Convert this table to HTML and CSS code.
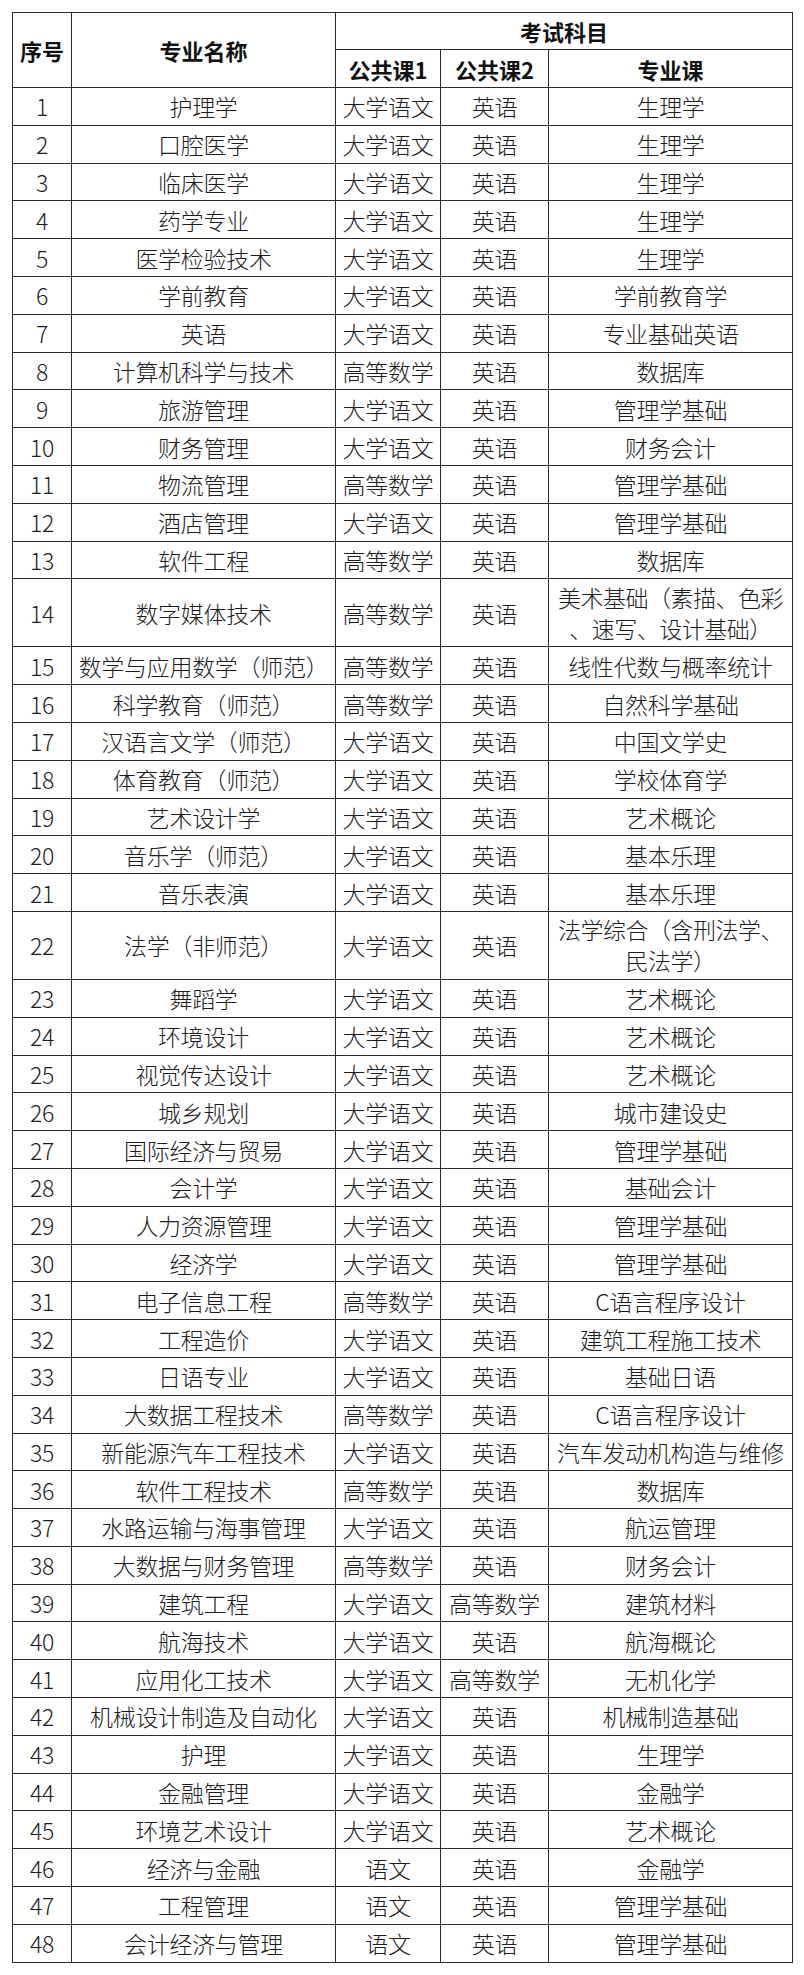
FILE: index.html
```html
<!DOCTYPE html>
<html lang="zh-CN">
<head>
<meta charset="utf-8">
<title>考试科目</title>
<link rel="stylesheet" href="styles.css">
</head>
<body>
<table class="exam">
<colgroup>
<col class="c-no"><col class="c-name"><col class="c-p1"><col class="c-p2"><col class="c-major">
</colgroup>
<thead>
<tr class="h1"><th rowspan="2">序号</th><th rowspan="2">专业名称</th><th colspan="3">考试科目</th></tr>
<tr class="h2"><th>公共课1</th><th>公共课2</th><th>专业课</th></tr>
</thead>
<tbody>
<tr><td>1</td><td>护理学</td><td>大学语文</td><td>英语</td><td>生理学</td></tr>
<tr><td>2</td><td>口腔医学</td><td>大学语文</td><td>英语</td><td>生理学</td></tr>
<tr><td>3</td><td>临床医学</td><td>大学语文</td><td>英语</td><td>生理学</td></tr>
<tr><td>4</td><td>药学专业</td><td>大学语文</td><td>英语</td><td>生理学</td></tr>
<tr><td>5</td><td>医学检验技术</td><td>大学语文</td><td>英语</td><td>生理学</td></tr>
<tr><td>6</td><td>学前教育</td><td>大学语文</td><td>英语</td><td>学前教育学</td></tr>
<tr><td>7</td><td>英语</td><td>大学语文</td><td>英语</td><td>专业基础英语</td></tr>
<tr><td>8</td><td>计算机科学与技术</td><td>高等数学</td><td>英语</td><td>数据库</td></tr>
<tr><td>9</td><td>旅游管理</td><td>大学语文</td><td>英语</td><td>管理学基础</td></tr>
<tr><td>10</td><td>财务管理</td><td>大学语文</td><td>英语</td><td>财务会计</td></tr>
<tr><td>11</td><td>物流管理</td><td>高等数学</td><td>英语</td><td>管理学基础</td></tr>
<tr><td>12</td><td>酒店管理</td><td>大学语文</td><td>英语</td><td>管理学基础</td></tr>
<tr><td>13</td><td>软件工程</td><td>高等数学</td><td>英语</td><td>数据库</td></tr>
<tr class="tall"><td>14</td><td>数字媒体技术</td><td>高等数学</td><td>英语</td><td class="wrap">美术基础（素描、色彩<br>、速写、设计基础）</td></tr>
<tr><td>15</td><td>数学与应用数学（师范）</td><td>高等数学</td><td>英语</td><td>线性代数与概率统计</td></tr>
<tr><td>16</td><td>科学教育（师范）</td><td>高等数学</td><td>英语</td><td>自然科学基础</td></tr>
<tr><td>17</td><td>汉语言文学（师范）</td><td>大学语文</td><td>英语</td><td>中国文学史</td></tr>
<tr><td>18</td><td>体育教育（师范）</td><td>大学语文</td><td>英语</td><td>学校体育学</td></tr>
<tr><td>19</td><td>艺术设计学</td><td>大学语文</td><td>英语</td><td>艺术概论</td></tr>
<tr><td>20</td><td>音乐学（师范）</td><td>大学语文</td><td>英语</td><td>基本乐理</td></tr>
<tr><td>21</td><td>音乐表演</td><td>大学语文</td><td>英语</td><td>基本乐理</td></tr>
<tr class="tall"><td>22</td><td>法学（非师范）</td><td>大学语文</td><td>英语</td><td class="wrap">法学综合（含刑法学、<br>民法学）</td></tr>
<tr><td>23</td><td>舞蹈学</td><td>大学语文</td><td>英语</td><td>艺术概论</td></tr>
<tr><td>24</td><td>环境设计</td><td>大学语文</td><td>英语</td><td>艺术概论</td></tr>
<tr><td>25</td><td>视觉传达设计</td><td>大学语文</td><td>英语</td><td>艺术概论</td></tr>
<tr><td>26</td><td>城乡规划</td><td>大学语文</td><td>英语</td><td>城市建设史</td></tr>
<tr><td>27</td><td>国际经济与贸易</td><td>大学语文</td><td>英语</td><td>管理学基础</td></tr>
<tr><td>28</td><td>会计学</td><td>大学语文</td><td>英语</td><td>基础会计</td></tr>
<tr><td>29</td><td>人力资源管理</td><td>大学语文</td><td>英语</td><td>管理学基础</td></tr>
<tr><td>30</td><td>经济学</td><td>大学语文</td><td>英语</td><td>管理学基础</td></tr>
<tr><td>31</td><td>电子信息工程</td><td>高等数学</td><td>英语</td><td>C语言程序设计</td></tr>
<tr><td>32</td><td>工程造价</td><td>大学语文</td><td>英语</td><td>建筑工程施工技术</td></tr>
<tr><td>33</td><td>日语专业</td><td>大学语文</td><td>英语</td><td>基础日语</td></tr>
<tr><td>34</td><td>大数据工程技术</td><td>高等数学</td><td>英语</td><td>C语言程序设计</td></tr>
<tr><td>35</td><td>新能源汽车工程技术</td><td>大学语文</td><td>英语</td><td>汽车发动机构造与维修</td></tr>
<tr><td>36</td><td>软件工程技术</td><td>高等数学</td><td>英语</td><td>数据库</td></tr>
<tr><td>37</td><td>水路运输与海事管理</td><td>大学语文</td><td>英语</td><td>航运管理</td></tr>
<tr><td>38</td><td>大数据与财务管理</td><td>高等数学</td><td>英语</td><td>财务会计</td></tr>
<tr><td>39</td><td>建筑工程</td><td>大学语文</td><td>高等数学</td><td>建筑材料</td></tr>
<tr><td>40</td><td>航海技术</td><td>大学语文</td><td>英语</td><td>航海概论</td></tr>
<tr><td>41</td><td>应用化工技术</td><td>大学语文</td><td>高等数学</td><td>无机化学</td></tr>
<tr><td>42</td><td>机械设计制造及自动化</td><td>大学语文</td><td>英语</td><td>机械制造基础</td></tr>
<tr><td>43</td><td>护理</td><td>大学语文</td><td>英语</td><td>生理学</td></tr>
<tr><td>44</td><td>金融管理</td><td>大学语文</td><td>英语</td><td>金融学</td></tr>
<tr><td>45</td><td>环境艺术设计</td><td>大学语文</td><td>英语</td><td>艺术概论</td></tr>
<tr><td>46</td><td>经济与金融</td><td>语文</td><td>英语</td><td>金融学</td></tr>
<tr><td>47</td><td>工程管理</td><td>语文</td><td>英语</td><td>管理学基础</td></tr>
<tr><td>48</td><td>会计经济与管理</td><td>语文</td><td>英语</td><td>管理学基础</td></tr>
</tbody>
</table>
</body>
</html>
```

FILE: styles.css
```css
html, body {
  margin: 0;
  padding: 0;
  background: #ffffff;
}

body {
  padding: 12px 0 0 12px;
  font-family: "Noto Sans CJK SC", "Noto Sans", sans-serif;
  color: #1c1c1c;
}

.exam {
  border-collapse: collapse;
  table-layout: fixed;
  width: 780px;
}

.c-no { width: 59px; }
.c-name { width: 264px; }
.c-p1 { width: 105px; }
.c-p2 { width: 108px; }
.c-major { width: 244px; }

.exam th,
.exam td {
  border: 1px solid #2a2a2a;
  padding: 0 1px;
  text-align: center;
  vertical-align: middle;
  white-space: nowrap;
  overflow: visible;
  font-size: 23px;
  line-height: 30px;
}

.exam th {
  font-weight: 700;
  font-size: 22px;
  color: #111111;
}

.exam td {
  font-weight: 300;
  letter-spacing: -0.3px;
}

.h1 th { height: 36px; }
.h2 th { height: 37px; }

.exam tbody tr { height: 37.8px; }
.exam tbody tr.tall { height: 68px; }

.exam td.wrap {
  line-height: 31px;
  letter-spacing: -0.5px;
}
```
